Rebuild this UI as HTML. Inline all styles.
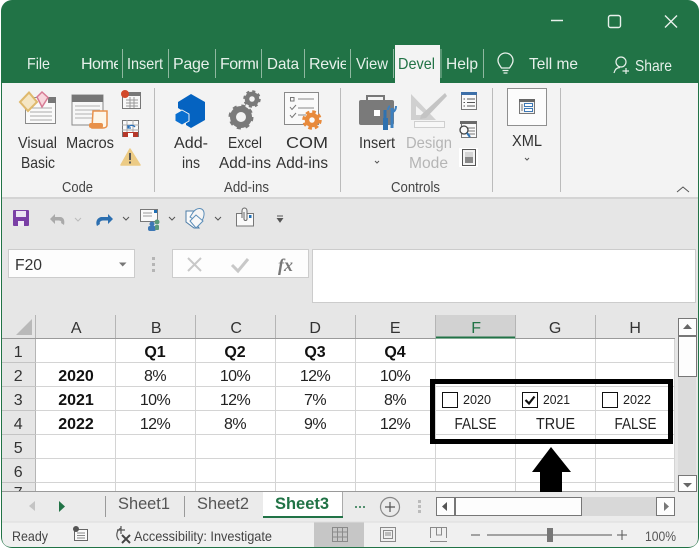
<!DOCTYPE html>
<html><head><meta charset="utf-8"><style>
html,body{margin:0;padding:0;background:#fff;width:700px;height:549px;overflow:hidden}
svg{display:block}
text{font-family:"Liberation Sans",sans-serif;font-size:16px;fill:#333}
.w{fill:#e6f0ea;font-size:16px}
.r{font-size:16px;fill:#444}
.h{font-size:16px;fill:#333;text-anchor:middle;letter-spacing:-.3px}
.c{font-size:16px;fill:#222;text-anchor:middle;letter-spacing:-.6px}
.b{font-size:16px;font-weight:bold;fill:#111;text-anchor:middle}
.g{font-size:15px;fill:#444}
.d{stroke:#bbb;stroke-width:1;fill:none}
.t{stroke:#8fb8a0;stroke-width:1}
.l{stroke:#d4d4d4;stroke-width:1}
.ch{fill:none;stroke:#555;stroke-width:1}
</style></head><body>
<svg width="700" height="549" viewBox="0 0 700 549" xmlns="http://www.w3.org/2000/svg">
<rect width="700" height="549" fill="#fff"/>
<rect x="1" y="0" width="698" height="548" rx="11" fill="#217346"/>
<rect x="2" y="83" width="696" height="114" fill="#f3f3f3"/>
<rect x="2" y="197" width="696" height="2" fill="#d4d4d4"/>
<rect x="2" y="199" width="696" height="293" fill="#e6e6e6"/>
<!-- window controls -->
<path d="M551 20.500H563" stroke="#e8f0eb" stroke-width="1.500"/>
<rect x="608.500" y="15.500" width="12" height="12" rx="2" fill="none" stroke="#e8f0eb" stroke-width="1.400"/>
<path d="M665 15.500L677 27.500M677 15.500L665 27.500" stroke="#e8f0eb" stroke-width="1.400"/>
<!-- tabs -->
<rect x="395" y="45" width="45" height="38" fill="#f3f3f3"/>
<text class="w" x="27" y="69" textLength="23" lengthAdjust="spacingAndGlyphs">File</text>
<svg x="81" y="50" width="37" height="28"><text class="w" x="0" y="19" style="letter-spacing:-.5px">Home</text></svg>
<text class="w" x="127" y="69" textLength="36" lengthAdjust="spacingAndGlyphs">Insert</text>
<svg x="173" y="50" width="38" height="28"><text class="w" x="0" y="19" style="letter-spacing:-.3px">Page Layout</text></svg>
<svg x="220" y="50" width="38" height="28"><text class="w" x="0" y="19" style="letter-spacing:-.5px">Formulas</text></svg>
<text class="w" x="267" y="69" textLength="32" lengthAdjust="spacingAndGlyphs">Data</text>
<svg x="309" y="50" width="37" height="28"><text class="w" x="0" y="19" style="letter-spacing:-.3px">Review</text></svg>
<text class="w" x="356" y="69" textLength="32" lengthAdjust="spacingAndGlyphs">View</text>
<text x="398" y="69" textLength="37" lengthAdjust="spacingAndGlyphs" style="fill:#217346">Devel</text>
<text class="w" x="446" y="69" textLength="32" lengthAdjust="spacingAndGlyphs">Help</text>
<text class="w" x="529" y="69" textLength="49" lengthAdjust="spacingAndGlyphs">Tell me</text>
<text class="w" x="635" y="71" textLength="37" lengthAdjust="spacingAndGlyphs">Share</text>
<path class="t" d="M122.500 49V78M168.500 49V78M215.500 49V78M261.500 49V78M304.500 49V78M350.500 49V78M393.500 49V78M441 49V78M483.500 49V78"/>
<!-- bulb -->
<path d="M501.500 68C499.500 65 498 63.500 498 60.500A7.500 7.500 0 0 1 513 60.500C513 63.500 511.500 65 509.500 68ZM502.500 70.500H508.500M503.500 73H507.500" fill="none" stroke="#e8f0eb" stroke-width="1.300"/>
<!-- share icon -->
<circle cx="621" cy="62" r="5" fill="none" stroke="#e8f0eb" stroke-width="1.200"/>
<path d="M614 73C615 69 617 67.500 620 67.500M626 68V74M622.500 71H629" fill="none" stroke="#e8f0eb" stroke-width="1.200"/>
<!-- ribbon separators -->
<path class="d" d="M154.500 88V192M340.500 88V192M492.500 88V192M560.500 88V192"/>
<!-- Visual Basic icon -->
<rect x="25.500" y="97.500" width="30" height="26" fill="#fafafa" stroke="#8a8a8a"/>
<rect x="48" y="97" width="8" height="6" fill="#777"/>
<path d="M30 108H52M30 112H52M30 116H52M30 120H52" stroke="#aaa"/>
<path d="M20 102L29 92.500L37 102L28 111Z" fill="#f5e6c4" stroke="#dfb96d" stroke-width="2"/>
<path d="M37 97L42 92L48 97.500L42 107Z" fill="#f7d6dc" stroke="#d77b95" stroke-width="1.500"/>
<!-- Macros icon -->
<rect x="72" y="95" width="31" height="30" fill="#f7f7f7" stroke="#8a8a8a"/>
<rect x="72" y="95" width="31" height="7" fill="#767676"/>
<path d="M75 106H100M75 110H100M75 114H92M75 118H92" stroke="#b0b0b0"/>
<path d="M93 111H107V125C107 127 105 128 103 128H92Z" fill="#fdf6e9" stroke="#e8914a" stroke-width="1.500"/>
<rect x="89" y="123" width="14" height="5" rx="2" fill="#e8914a"/>
<!-- macro small icons -->
<rect x="122.500" y="92.500" width="18" height="16" fill="#f7f7f7" stroke="#777"/>
<rect x="123" y="92" width="18" height="4" fill="#777"/>
<path d="M126 100H138M126 103H138M126 106H138M130 97V108M134 97V108" stroke="#999"/>
<circle cx="125" cy="94" r="4" fill="#d2492a"/>
<rect x="122.500" y="120.500" width="16" height="16" fill="#fafafa" stroke="#777"/>
<path d="M122 125H139M122 130H139M127 120V137M133 120V137" stroke="#aaa"/>
<rect x="123" y="132" width="15" height="5" fill="#b5382a"/>
<rect x="128" y="133" width="5" height="4" fill="#fff"/>
<path d="M128 128A4 4 0 0 1 135 127M128 125V128H131" fill="none" stroke="#2a70b8" stroke-width="1.300"/>
<path d="M130 149L140 165H121Z" fill="#eccb85" stroke="#eccb85" stroke-width="1.500" stroke-linejoin="round"/>
<path d="M130 153V160M130 161.500V163.500" stroke="#555" stroke-width="2"/>
<text x="18" y="148" textLength="39" lengthAdjust="spacingAndGlyphs">Visual</text>
<text x="21" y="168" textLength="34" lengthAdjust="spacingAndGlyphs">Basic</text>
<text x="66" y="148" textLength="48" lengthAdjust="spacingAndGlyphs">Macros</text>
<text class="g" x="62" y="192" textLength="31" lengthAdjust="spacingAndGlyphs">Code</text>
<!-- Add-ins -->
<path d="M191 94L205 102V120L191 128L186 125V113L178 108V102Z" fill="#0563c1"/>
<path d="M182 110L189 114V121L182 125L175 121V114Z" fill="#0a6fd0" stroke="#f3f3f3" stroke-width="1"/>
<!-- gears -->
<g fill="none" stroke="#7a7a7a">
<circle cx="241" cy="117" r="8" stroke-width="6"/>
<circle cx="241" cy="117" r="11" stroke-width="3" stroke-dasharray="4 4.640"/>
<circle cx="252" cy="99" r="5" stroke-width="4.500"/>
<circle cx="252" cy="99" r="7.500" stroke-width="2.500" stroke-dasharray="3 2.890"/>
</g>
<!-- COM add-ins -->
<rect x="284.500" y="92.500" width="34" height="32" fill="#fafafa" stroke="#8a8a8a"/>
<path d="M298 99H314M298 108H314M298 115H306" stroke="#888"/>
<rect x="290.500" y="97.500" width="3.500" height="3.500" fill="none" stroke="#777"/>
<path d="M290 107L292 109.500L296 105M290 115L292 117.500L296 113" fill="none" stroke="#777"/>
<g fill="none" stroke="#e88a3c">
<circle cx="312" cy="120" r="5" stroke-width="4.500"/>
<circle cx="312" cy="120" r="8" stroke-width="3.500" stroke-dasharray="3.500 2.780"/>
</g>
<text x="174" y="148" textLength="34" lengthAdjust="spacingAndGlyphs">Add-</text>
<text x="182" y="168" textLength="18" lengthAdjust="spacingAndGlyphs">ins</text>
<text x="228" y="148" textLength="34" lengthAdjust="spacingAndGlyphs">Excel</text>
<text x="219" y="168" textLength="52" lengthAdjust="spacingAndGlyphs">Add-ins</text>
<text x="286" y="148" textLength="42" lengthAdjust="spacingAndGlyphs">COM</text>
<text x="276" y="168" textLength="52" lengthAdjust="spacingAndGlyphs">Add-ins</text>
<text class="g" x="224" y="192" textLength="45" lengthAdjust="spacingAndGlyphs">Add-ins</text>
<!-- Insert toolbox -->
<path d="M367 100V96H384V100" fill="none" stroke="#777" stroke-width="2"/>
<rect x="359" y="100" width="35" height="25" rx="2" fill="#7a7a7a"/>
<rect x="374" y="110" width="6" height="6" fill="#fff"/>
<path d="M385 110V129" stroke="#2f72b0" stroke-width="3"/>
<path d="M392 108V128" stroke="#3d80bf" stroke-width="3"/>
<path d="M388 110C388 107 390 106 390 106M396 106C396 110 394 112 392 112" fill="none" stroke="#3d80bf" stroke-width="2"/>
<rect x="383" y="118" width="5" height="12" fill="#2f72b0"/>
<!-- Design mode -->
<path d="M411 94V120H436Z M416 106V115H426Z" fill="#d0d0d0" fill-rule="evenodd"/>
<path d="M421 115L445 93L447 96L426 118L420 119Z" fill="#c4c4c4"/>
<rect x="414.500" y="121.500" width="30" height="6" fill="#f7f7f7" stroke="#cfcfcf"/>
<!-- controls small -->
<rect x="461.500" y="92.500" width="15" height="17" fill="#fafafa" stroke="#777"/>
<rect x="461" y="92" width="16" height="3" fill="#3d6fa8"/>
<path d="M467 99H475M467 102.500H475M467 106H475M463.500 99H465M463.500 102.500H465M463.500 106H465" stroke="#555"/>
<rect x="461.500" y="122.500" width="15" height="15" fill="#fafafa" stroke="#777"/>
<rect x="460" y="121" width="17" height="3" fill="#6a6a6a"/>
<path d="M468 128H475M468 131H475M468 134H475" stroke="#777"/>
<circle cx="464" cy="130" r="4" fill="#fafafa" stroke="#444" stroke-width="1.300"/>
<path d="M467 133L470 137" stroke="#2f72b0" stroke-width="2"/>
<rect x="459" y="148" width="19" height="19" fill="#fff"/>
<rect x="462.500" y="149.500" width="13" height="16" fill="#f3f3f3" stroke="#555"/>
<rect x="465" y="152" width="8" height="5" fill="#d5d5d5"/>
<rect x="465" y="157" width="8" height="6" fill="#888"/>
<text x="359" y="148" textLength="36" lengthAdjust="spacingAndGlyphs">Insert</text>
<text x="406" y="148" textLength="46" lengthAdjust="spacingAndGlyphs" style="fill:#b5b5b5">Design</text>
<text x="409" y="168" textLength="39" lengthAdjust="spacingAndGlyphs" style="fill:#b5b5b5">Mode</text>
<text class="g" x="391" y="192" textLength="49" lengthAdjust="spacingAndGlyphs">Controls</text>
<path class="ch" d="M375 161L377 163L379 161"/>
<!-- XML -->
<rect x="507.500" y="88.500" width="39" height="37" fill="#fcfcfc" stroke="#8f8f8f"/>
<rect x="519.500" y="99.500" width="15" height="14" fill="#f3f3f3" stroke="#777"/>
<rect x="519" y="99" width="16" height="3" fill="#666"/>
<path d="M522 104V111" stroke="#777"/>
<rect x="524.500" y="103.500" width="8" height="3" fill="#fff" stroke="#3d78b5"/>
<rect x="524.500" y="108.500" width="8" height="3" fill="#fff" stroke="#3d78b5"/>
<text x="512" y="146" textLength="30" lengthAdjust="spacingAndGlyphs">XML</text>
<path class="ch" d="M525 158L527 160L529 158"/>
<path d="M677 192L683 187L689 192" fill="none" stroke="#555"/>
<!-- QAT -->
<rect x="13" y="210" width="16" height="16" rx="1" fill="#7a3fa5"/>
<rect x="16" y="211" width="10" height="6" fill="#ece4f3"/>
<rect x="18" y="221" width="6" height="5" fill="#f0eaf5"/>
<path d="M50 219L55 214V217H60C64 217 65 221 64 225L61 223C62 221 60 220.500 58 220.500H55V224Z" fill="#aaa"/>
<path d="M75 218L78 221L81 218" fill="none" stroke="#bbb"/>
<path d="M113 219L108 214V217H102C98 217 95 221 97 226L100 224C99 222 101 220.500 103 220.500H108V224Z" fill="#2c6fb0"/>
<path class="ch" d="M123 217L126 220L129 217"/>
<rect x="140.500" y="209.500" width="17" height="12" fill="#fafafa" stroke="#777"/>
<path d="M143 213H152M143 216H152" stroke="#999"/>
<rect x="154" y="210" width="3" height="3" fill="#1f6fb5"/>
<circle cx="152" cy="224" r="2.500" fill="#3d78b5"/><rect x="148" y="226" width="8" height="5" rx="2" fill="#3d78b5"/>
<circle cx="157" cy="222" r="2.500" fill="#5a9a7a"/><rect x="155" y="225" width="4" height="5" rx="1" fill="#5a9a7a"/>
<path class="ch" d="M169 217L172 220L175 217"/>
<path d="M186 211H196L192.500 219L199 228L194 228L186 222Z" fill="#fafafa" stroke="#4d7da8"/>
<path d="M192 214C196 206 205 207 204 215C203.500 219 202 221 200 223L190 217Z" fill="#f5f5f5" stroke="#5b8db8"/>
<path d="M190 221L196 215L203 221L196 228Z" fill="#f8f8f8" stroke="#5b8db8"/>
<path class="ch" d="M215 217L218 220L221 217"/>
<rect x="236.500" y="213.500" width="17" height="12.500" fill="#fafafa" stroke="#777"/>
<path d="M242 218V211C242 207 247 207 247 211V219C247 221 244 221 244 219V212" fill="#f3f3f3" stroke="#666"/>
<rect x="249" y="215" width="2.500" height="3" fill="#1f6fb5"/>
<path d="M277 216H283M277.500 218.500L280 222L282.500 218.500Z" stroke="#555" fill="#555"/>
<!-- name box -->
<rect x="8.500" y="249.500" width="126" height="28" fill="#fdfdfd" stroke="#ccc"/>
<text x="15" y="270" textLength="27" lengthAdjust="spacingAndGlyphs">F20</text>
<path d="M119 262.500H126.500L122.700 266.500Z" fill="#777"/>
<path d="M153.500 257V260M153.500 263V266M153.500 269V272" stroke="#b5b5b5" stroke-width="3"/>
<rect x="172.500" y="249.500" width="136" height="28" fill="#fdfdfd" stroke="#ccc"/>
<path d="M188 258L201 271M201 258L188 271" stroke="#c8c8c8" stroke-width="2"/>
<path d="M232 265L238 271L248 259" fill="none" stroke="#c8c8c8" stroke-width="3"/>
<text x="278" y="271" style="font-family:'Liberation Serif',serif;font-style:italic;font-weight:bold;font-size:18px;fill:#777">fx</text>
<rect x="312.500" y="249.500" width="383" height="53" fill="#fff" stroke="#ccc"/>
<!-- grid -->
<rect x="36" y="339" width="639" height="153" fill="#fff"/>
<rect x="435" y="315" width="80" height="23" fill="#d2d2d2"/>
<rect x="435" y="336.500" width="81" height="2" fill="#217346"/>
<path d="M16 335H32V319Z" fill="#b9b9b9"/>
<path d="M35.500 315V492M115.500 315V338M195.500 315V338M275.500 315V338M355.500 315V338M435.500 315V338M515.500 315V338M595.500 315V338" stroke="#b5b5b5"/>
<path d="M2 338.500H435M516 338.500H675" stroke="#9a9a9a"/>
<path d="M2 362.500H36M2 386.500H36M2 410.500H36M2 434.500H36M2 458.500H36M2 482.500H36" stroke="#c4c4c4"/>
<path class="l" d="M36 362.500H675M36 386.500H675M36 410.500H675M36 434.500H675M36 458.500H675M36 482.500H675M115.500 339V492M195.500 339V492M275.500 339V492M355.500 339V492M435.500 339V492M515.500 339V492M595.500 339V492M674.500 339V492"/>
<path d="M2 491.500H675" stroke="#9a9a9a"/>
<text class="h" x="76" y="333">A</text><text class="h" x="156" y="333">B</text><text class="h" x="236" y="333">C</text><text class="h" x="315" y="333">D</text><text class="h" x="395" y="333">E</text><text class="h" x="476" y="333" style="fill:#217346">F</text><text class="h" x="555" y="333">G</text><text class="h" x="635" y="333">H</text>
<text class="h" x="18" y="357">1</text><text class="h" x="18" y="381">2</text><text class="h" x="18" y="405">3</text><text class="h" x="18" y="429">4</text><text class="h" x="18" y="453">5</text><text class="h" x="18" y="477">6</text>
<svg x="2" y="484" width="33" height="7"><text class="h" x="16" y="14">7</text></svg>
<text class="b" x="155" y="357">Q1</text><text class="b" x="235" y="357">Q2</text><text class="b" x="315" y="357">Q3</text><text class="b" x="395" y="357">Q4</text>
<text class="b" x="76" y="381">2020</text><text class="b" x="76" y="405">2021</text><text class="b" x="76" y="429">2022</text>
<text class="c" x="155" y="381">8%</text><text class="c" x="235" y="381">10%</text><text class="c" x="315" y="381">12%</text><text class="c" x="395" y="381">10%</text>
<text class="c" x="155" y="405">10%</text><text class="c" x="235" y="405">12%</text><text class="c" x="315" y="405">7%</text><text class="c" x="395" y="405">8%</text>
<text class="c" x="155" y="429">12%</text><text class="c" x="235" y="429">8%</text><text class="c" x="315" y="429">9%</text><text class="c" x="395" y="429">12%</text>
<!-- checkboxes -->
<rect x="442.500" y="392.500" width="15" height="15" fill="#fff" stroke="#111"/>
<rect x="522.500" y="392.500" width="15" height="15" fill="#fff" stroke="#111"/>
<path d="M525.500 400L529 403.500L534.500 396.500" fill="none" stroke="#111" stroke-width="2.200"/>
<rect x="602.500" y="392.500" width="15" height="15" fill="#fff" stroke="#111"/>
<text x="463" y="404" textLength="28" lengthAdjust="spacingAndGlyphs" style="font-size:13px;fill:#222">2020</text>
<text x="543" y="404" textLength="27" lengthAdjust="spacingAndGlyphs" style="font-size:13px;fill:#222">2021</text>
<text x="623" y="404" textLength="28" lengthAdjust="spacingAndGlyphs" style="font-size:13px;fill:#222">2022</text>
<text x="454.500" y="429" textLength="42" lengthAdjust="spacingAndGlyphs" style="fill:#222">FALSE</text>
<text x="536" y="429" textLength="39" lengthAdjust="spacingAndGlyphs" style="fill:#222">TRUE</text>
<text x="614.500" y="429" textLength="42" lengthAdjust="spacingAndGlyphs" style="fill:#222">FALSE</text>
<rect x="432.500" y="381.500" width="238" height="60" fill="none" stroke="#000" stroke-width="5"/>
<!-- arrow -->
<path d="M551 447L571 472H562V493H540V472H532Z" fill="#000"/>
<!-- vertical scrollbar -->
<rect x="675" y="315" width="23" height="177" fill="#e6e6e6"/>
<rect x="678" y="318" width="18" height="174" fill="#dcdcdc"/>
<rect x="678.500" y="318.500" width="18" height="17" fill="#fdfdfd" stroke="#777"/>
<path d="M683 329H692L687.500 324Z" fill="#666"/>
<rect x="678.500" y="336.500" width="18" height="40" fill="#fdfdfd" stroke="#777"/>
<rect x="678.500" y="475.500" width="18" height="16" fill="#fdfdfd" stroke="#777"/>
<path d="M683 483H692L687.500 487.500Z" fill="#666"/>
<!-- sheet tabs -->
<rect x="2" y="492" width="696" height="30" fill="#ebebeb"/>
<path d="M29 506L35 501V511Z" fill="#c4c4c4"/>
<path d="M59 501L65 506.500L59 512Z" fill="#217346"/>
<path d="M105.500 496V517M184.500 496V517" stroke="#9a9a9a"/>
<rect x="263" y="492" width="79" height="24" fill="#fff"/>
<rect x="263" y="516" width="80" height="2" fill="#217346"/>
<path d="M342.500 492V516" stroke="#aaa"/>
<text x="118" y="509" textLength="52" lengthAdjust="spacingAndGlyphs" style="font-size:17px;fill:#555">Sheet1</text>
<text x="197" y="509" textLength="52" lengthAdjust="spacingAndGlyphs" style="font-size:17px;fill:#555">Sheet2</text>
<text x="275" y="509" textLength="54" lengthAdjust="spacingAndGlyphs" style="font-size:17px;font-weight:bold;fill:#217346">Sheet3</text>
<path d="M355 507H357M359 507H361M363 507H365" stroke="#217346" stroke-width="1.500"/>
<circle cx="390" cy="507" r="9.500" fill="none" stroke="#888" stroke-width="1.200"/>
<path d="M385 507H395M390 502V512" stroke="#555" stroke-width="1.200"/>
<path d="M419.500 500V503M419.500 505V508M419.500 510V513" stroke="#bbb" stroke-width="3"/>
<!-- horizontal scrollbar -->
<rect x="436" y="497" width="238" height="19" fill="#d8d8d8"/>
<rect x="436.500" y="497.500" width="18" height="18" fill="#fdfdfd" stroke="#777"/>
<path d="M447 502V511L442 506.500Z" fill="#555"/>
<rect x="455.500" y="497.500" width="126" height="18" fill="#fdfdfd" stroke="#777"/>
<rect x="656.500" y="497.500" width="18" height="18" fill="#fdfdfd" stroke="#777"/>
<path d="M664 502V511L669 506.500Z" fill="#777"/>
<!-- status -->
<path d="M2 522H698V537Q698 547 688 547H12Q2 547 2 537Z" fill="#f0f0f0"/>
<rect x="314" y="522" width="50" height="25" fill="#c6c6c6"/>
<path d="M2 522H698" stroke="#dcdcdc"/>
<text x="12" y="541" textLength="36" lengthAdjust="spacingAndGlyphs" style="font-size:14px;fill:#444">Ready</text>
<rect x="74.500" y="529.500" width="13" height="11" fill="#fafafa" stroke="#666"/>
<path d="M77 533H85M77 535.500H85M77 538H85" stroke="#888"/>
<circle cx="76" cy="529" r="3" fill="#555"/>
<path d="M121 528A7.500 7.500 0 0 0 119 540M121 526V534M117 530H125" fill="none" stroke="#555" stroke-width="1.200"/>
<path d="M122 535L130 543M130 535L122 543" stroke="#444" stroke-width="2"/>
<text x="134" y="541" textLength="138" lengthAdjust="spacingAndGlyphs" style="font-size:14px;fill:#444">Accessibility: Investigate</text>
<rect x="332.500" y="527.500" width="15" height="14" fill="none" stroke="#8a8a8a"/>
<path d="M337.500 528V541M342.500 528V541M333 532H347M333 537H347" stroke="#8a8a8a"/>
<rect x="380.500" y="527.500" width="15" height="14" fill="none" stroke="#8a8a8a"/>
<rect x="383.500" y="530.500" width="9" height="8" fill="none" stroke="#8a8a8a"/>
<path d="M385 533H391M385 535H391" stroke="#8a8a8a"/>
<path d="M430.500 538V527.500H446.500V538M430 541.500H447M436.500 528V535H441.500V528" fill="none" stroke="#8a8a8a"/>
<path d="M471 535H480M487 535H612M617 535H627M622 530V540" stroke="#555"/>
<rect x="547" y="528" width="6" height="14" fill="#777"/>
<text x="645" y="541" textLength="31" lengthAdjust="spacingAndGlyphs" style="font-size:14px;fill:#555">100%</text>
</svg>
</body></html>
